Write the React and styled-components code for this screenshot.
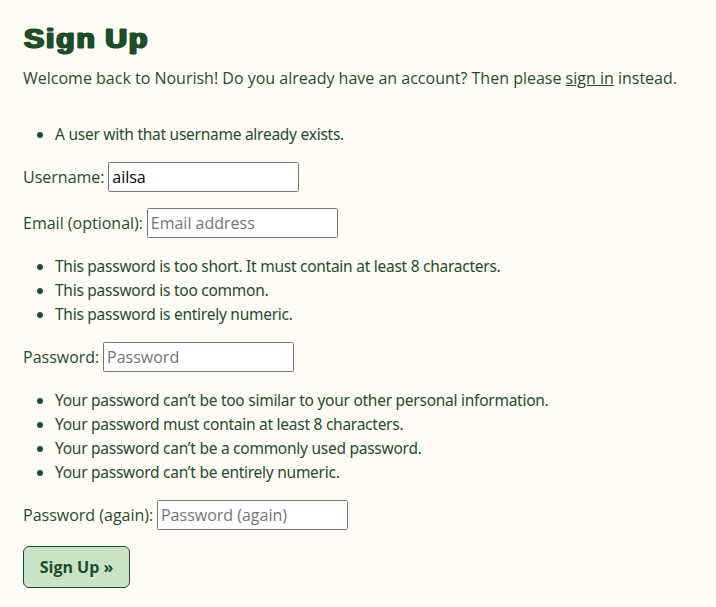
import React from "react";
import styled, { createGlobalStyle } from "styled-components";

const GlobalStyle = createGlobalStyle`
  body {
    margin: 0;
    min-height: 100vh;
    background: #fffcf5;
    color: #1e4d2b;
    font: 16px/24px "Open Sans", sans-serif;
  }
`;

const Page = styled.main`
  box-sizing: border-box;
  padding: 20px 23px;
`;
const Title = styled.h1`
  width: fit-content;
  margin: 0 0 8px;
  padding-left: 1px;
  font: 700 28px/38px "Liberation Sans", sans-serif;
  -webkit-text-stroke: 1.2px #1e4d2b;
  text-shadow: 1.3px 0 #1e4d2b, -1.2px 0 #1e4d2b;
  letter-spacing: 1.8px;
  word-spacing: -1.5px;
  transform: scaleX(1.07);
  transform-origin: left;
`;
const Intro = styled.p`
  margin: 0 0 32px;
  white-space: nowrap;
`;
const Link = styled.a`
  color: inherit;
  text-decoration: underline;
`;
const Messages = styled.ul`
  margin: 0 0 16px;
  padding-left: 32px;
`;
const Message = styled.li`
  white-space: nowrap;
`;
const MessageText = styled.span`
  font-family: "Noto Sans", sans-serif;
  font-size: 15.5px;
  letter-spacing: -0.26px;
`;
const Field = styled.div`
  display: flex;
  align-items: center;
  gap: 3.75px;
  height: 30px;
  margin-bottom: 16px;
`;
const Input = styled.input`
  box-sizing: border-box;
  width: 191px;
  height: 30px;
  margin: 0;
  padding: 1px 3px;
  border: 1px solid #767676;
  border-radius: 1.5px;
  background: #fff;
  color: #000;
  font: inherit;
  &::placeholder { color: #757575; }
`;
const Button = styled.button`
  box-sizing: border-box;
  width: 107px;
  height: 42px;
  padding: 0;
  border: 1px solid #1e4d2b;
  border-radius: 6px;
  background: #c9e4c5;
  color: #1e4d2b;
  font: 700 16px/24px "Open Sans", sans-serif;
`;

const MessageList = ({ items }) => (
  <Messages>
    {items.map((m) => <Message key={m}><MessageText>{m}</MessageText></Message>)}
  </Messages>
);

export default function App() {
  return (
    <Page>
      <GlobalStyle />
      <Title>Sign Up</Title>
      <Intro>Welcome back to Nourish! Do you already have an account? Then please <Link href="#">sign in</Link> instead.</Intro>
      <MessageList items={["A user with that username already exists."]} />
      <Field><label htmlFor="u">Username:</label><Input id="u" defaultValue="ailsa" /></Field>
      <Field><label htmlFor="e">Email (optional):</label><Input id="e" placeholder="Email address" /></Field>
      <MessageList items={["This password is too short. It must contain at least 8 characters.", "This password is too common.", "This password is entirely numeric."]} />
      <Field><label htmlFor="p">Password:</label><Input id="p" type="password" placeholder="Password" /></Field>
      <MessageList items={["Your password can’t be too similar to your other personal information.", "Your password must contain at least 8 characters.", "Your password can’t be a commonly used password.", "Your password can’t be entirely numeric."]} />
      <Field><label htmlFor="p2">Password (again):</label><Input id="p2" type="password" placeholder="Password (again)" /></Field>
      <Button type="button">Sign Up »</Button>
    </Page>
  );
}
